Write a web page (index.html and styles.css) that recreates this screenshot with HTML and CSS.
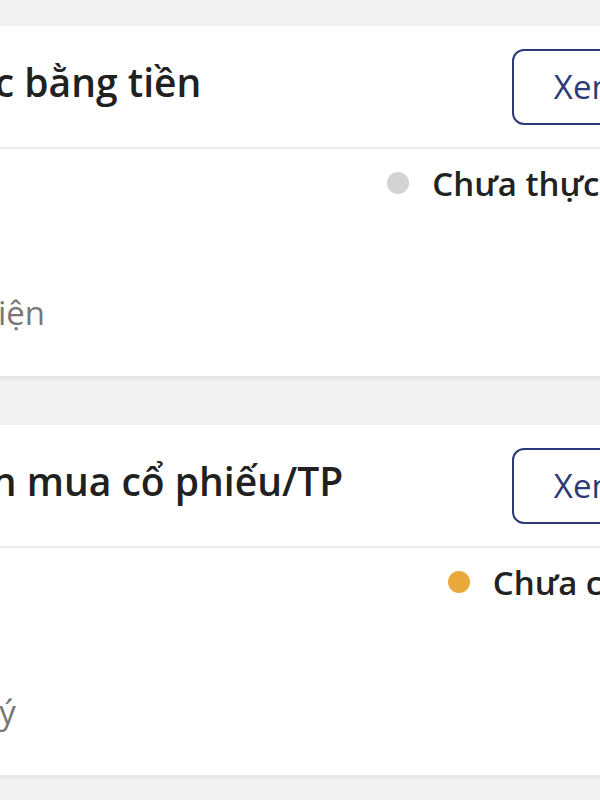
FILE: index.html
```html
<!DOCTYPE html>
<html lang="vi">
<head>
  <meta charset="UTF-8" />
  <meta name="viewport" content="width=device-width, initial-scale=1.0"/>
  <title>Quyền cổ đông</title>
  <link rel="stylesheet" href="styles.css">
</head>
<body>

<div class="screen">
  <div class="card">
    <div class="card-header">
      <h2 class="card-title">Cổ tức bằng tiền</h2>
      <button class="btn-view">Xem</button>
    </div>
    <div class="card-body">
      <div class="status">
        <span class="dot dot-gray"></span>
        <span class="status-text">Chưa thực hiện</span>
      </div>
      <div class="info-row">
        <span class="info-label">Thực hiện</span>
      </div>
    </div>
  </div>

  <div class="card">
    <div class="card-header">
      <h2 class="card-title">Quyền mua cổ phiếu/TP</h2>
      <button class="btn-view">Xem</button>
    </div>
    <div class="card-body">
      <div class="status">
        <span class="dot dot-orange"></span>
        <span class="status-text">Chưa có KQ</span>
      </div>
      <div class="info-row">
        <span class="info-label">Đăng ký</span>
      </div>
    </div>
  </div>
</div>

</body>
</html>
```

FILE: styles.css
```css
html, body {
  margin: 0;
  padding: 0;
}
body {
  font-family: "Open Sans", "Noto Sans", Arial, sans-serif;
  background: #f2f2f2;
  overflow: hidden;
  height: 800px;
}
.screen {
  width: 857px;
  margin-left: -137px;
  padding-top: 26px;
  display: flex;
  flex-direction: column;
  gap: 49px;
}
.card {
  background: #fff;
  box-shadow: 0 2px 5px rgba(0,0,0,0.08);
}
.card-header {
  height: 121px;
  padding: 0 56px 0 30px;
  display: flex;
  align-items: center;
  justify-content: space-between;
  border-bottom: 2px solid #ededed;
}
.card-title {
  margin: 0 0 10px 0;
  font-size: 39px;
  font-weight: 600;
  color: #212121;
  line-height: 52px;
  white-space: nowrap;
}
.btn-view {
  height: 76px;
  padding: 0 40px;
  background: #fff;
  border: 2px solid #2c3a78;
  border-radius: 12px;
  color: #2c3a78;
  font-family: inherit;
  font-size: 33px;
  font-weight: 400;
}
.card-body {
  padding: 12px 42px 41px 30px;
}
.status {
  display: flex;
  justify-content: flex-end;
  align-items: center;
  gap: 23px;
  height: 44px;
}
.dot {
  width: 22px;
  height: 22px;
  border-radius: 50%;
}
.dot-gray {
  background: #d3d3d3;
}
.dot-orange {
  background: #e8a93a;
}
.status-text {
  font-size: 33px;
  font-weight: 600;
  color: #222;
  white-space: nowrap;
}
.info-row {
  margin-top: 86px;
  height: 44px;
  display: flex;
}
.info-label {
  font-size: 33px;
  line-height: 44px;
  color: #777;
  white-space: nowrap;
}
```
